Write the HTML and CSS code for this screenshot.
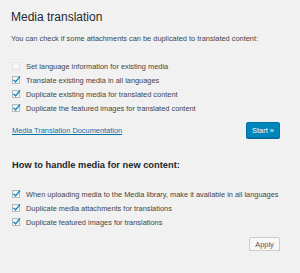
FILE: index.html
```html
<!DOCTYPE html>
<html lang="en">
<head>
    <meta charset="UTF-8">
    <title>Media translation</title>
    <link rel="stylesheet" href="styles.css">
</head>
<body>
    <div class="wrap">
        <h1>Media translation</h1>
        <p class="intro">You can check if some attachments can be duplicated to translated content:</p>

        <div class="options">
            <label class="opt"><span class="box off"></span>Set language information for existing media</label>
            <label class="opt"><span class="box"><svg viewBox="0 0 10 10"><path d="M1.6 5.2 L4 7.6 L8.9 1.6"/></svg></span>Translate existing media in all languages</label>
            <label class="opt"><span class="box"><svg viewBox="0 0 10 10"><path d="M1.6 5.2 L4 7.6 L8.9 1.6"/></svg></span>Duplicate existing media for translated content</label>
            <label class="opt"><span class="box"><svg viewBox="0 0 10 10"><path d="M1.6 5.2 L4 7.6 L8.9 1.6"/></svg></span>Duplicate the featured images for translated content</label>
        </div>

        <div class="actions">
            <a href="#" class="doc-link">Media Translation Documentation</a>
            <button type="button" class="btn-primary">Start &raquo;</button>
        </div>

        <h2>How to handle media for new content:</h2>

        <div class="options">
            <label class="opt"><span class="box"><svg viewBox="0 0 10 10"><path d="M1.6 5.2 L4 7.6 L8.9 1.6"/></svg></span>When uploading media to the Media library, make it available in all languages</label>
            <label class="opt"><span class="box"><svg viewBox="0 0 10 10"><path d="M1.6 5.2 L4 7.6 L8.9 1.6"/></svg></span>Duplicate media attachments for translations</label>
            <label class="opt"><span class="box"><svg viewBox="0 0 10 10"><path d="M1.6 5.2 L4 7.6 L8.9 1.6"/></svg></span>Duplicate featured images for translations</label>
        </div>

        <div class="actions end">
            <button type="button" class="btn-secondary">Apply</button>
        </div>
    </div>
</body>
</html>
```

FILE: styles.css
```css
/* Admin page look */
body {
    background-color: #f1f1f1;
    color: #444444;
    font-family: "Liberation Sans", Arial, sans-serif;
    margin: 0;
    padding: 9px 21px 0 11px;
}

h1 {
    font-size: 12px;
    line-height: 16px;
    font-weight: normal;
    color: #23282d;
    margin: 0;
}

.intro {
    font-size: 7.4px;
    line-height: 10px;
    margin: 9px 0 0;
}

/* Checkbox rows */
.options {
    margin-top: 15px;
}

.opt {
    display: flex;
    align-items: center;
    gap: 6px;
    height: 14px;
    font-size: 7.4px;
    padding-left: 1px;
}

.box {
    width: 6px;
    height: 6px;
    border: 1px solid #b4b9be;
    background-color: #ffffff;
    box-shadow: inset 0 1px 1px rgba(0, 0, 0, 0.08);
    position: relative;
    flex-shrink: 0;
}

.box.off {
    border-color: #e2e2e2;
    background-color: #f7f7f7;
    box-shadow: none;
}

.box svg {
    position: absolute;
    left: -1px;
    top: -2px;
    width: 9px;
    height: 9px;
    fill: none;
    stroke: #1e8cbe;
    stroke-width: 1.6;
}

/* Link and buttons */
.actions {
    display: flex;
    justify-content: space-between;
    align-items: center;
    margin-top: 7px;
}

.actions.end {
    justify-content: flex-end;
    margin-top: 8px;
}

.doc-link {
    font-size: 7.4px;
    color: #0073aa;
    margin-left: 1px;
}

button {
    font-family: inherit;
    font-size: 7.4px;
    border-radius: 2px;
    cursor: pointer;
    margin-right: -1px;
}

.btn-primary {
    background-color: #0085ba;
    border: 1px solid #0073aa;
    box-shadow: 0 1px 0 #006799;
    color: #ffffff;
    width: 34px;
    height: 16px;
    padding: 0;
}

.btn-secondary {
    background-color: #f7f7f7;
    border: 1px solid #cccccc;
    box-shadow: 0 1px 0 #cccccc;
    color: #555555;
    width: 31px;
    height: 14px;
    padding: 0;
}

h2 {
    font-size: 9.3px;
    line-height: 12px;
    font-weight: bold;
    color: #23282d;
    margin: 21px 0 0 1px;
}

h2 + .options {
    margin-top: 16px;
}
```
